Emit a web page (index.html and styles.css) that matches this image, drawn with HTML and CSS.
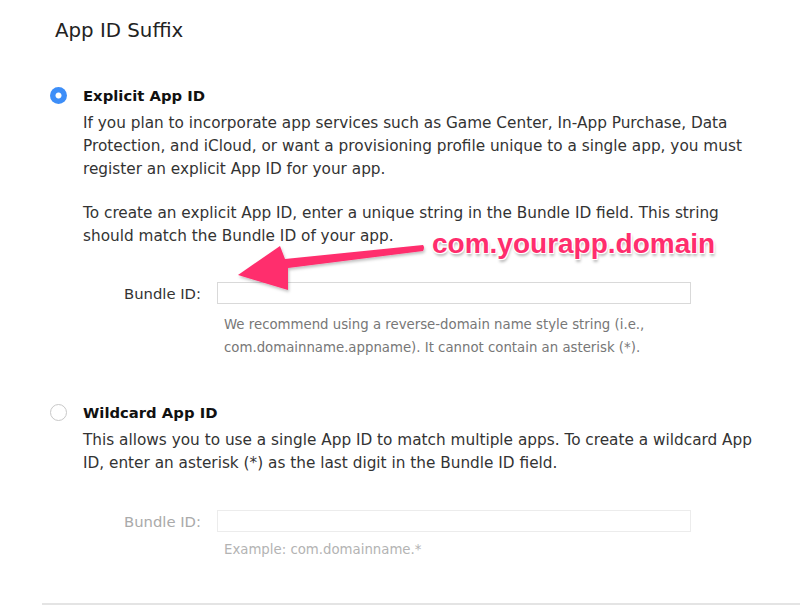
FILE: index.html
```html
<!DOCTYPE html>
<html lang="en">
<head>
<meta charset="utf-8">
<title>App ID Suffix</title>
<link rel="stylesheet" href="styles.css">
</head>
<body>
<div class="page">
  <h2 class="title">App ID Suffix</h2>

  <section class="option">
    <div class="option-head">
      <span class="radio radio-on"></span>
      <h3 class="option-name">Explicit App ID</h3>
    </div>
    <div class="option-body">
      <p class="text">If you plan to incorporate app services such as Game Center, In-App Purchase, Data Protection, and iCloud, or want a provisioning profile unique to a single app, you must register an explicit App ID for your app.</p>
      <p class="text">To create an explicit App ID, enter a unique string in the Bundle ID field. This string should match the Bundle ID of your app.</p>
      <div class="field">
        <label class="field-label">Bundle ID:</label>
        <div class="input"></div>
      </div>
      <p class="help">We recommend using a reverse-domain name style string (i.e., com.domainname.appname). It cannot contain an asterisk (*).</p>
    </div>
  </section>

  <section class="option option-second">
    <div class="option-head">
      <span class="radio"></span>
      <h3 class="option-name">Wildcard App ID</h3>
    </div>
    <div class="option-body">
      <p class="text">This allows you to use a single App ID to match multiple apps. To create a wildcard App ID, enter an asterisk (*) as the last digit in the Bundle ID field.</p>
      <div class="field field-disabled">
        <label class="field-label">Bundle ID:</label>
        <div class="input"></div>
      </div>
      <p class="help help-faint">Example: com.domainname.*</p>
    </div>
  </section>

  <div class="rule"></div>

  <div class="annotation">
    <svg class="arrow" width="200" height="60" viewBox="0 0 200 60">
      <defs>
        <filter id="sh" x="-10%" y="-20%" width="130%" height="150%">
          <feDropShadow dx="1" dy="2" stdDeviation="1.5" flood-color="#000" flood-opacity="0.25"/>
        </filter>
      </defs>
      <path d="M2 49 L44 20 L49 33 L187 19 Q189 21 187 25 L52 42 L52 64 Z" fill="#ff2d6d" filter="url(#sh)"/>
    </svg>
    <span class="note">com.yourapp.domain</span>
  </div>
</div>
</body>
</html>
```
FILE: styles.css
```css
html, body {
  margin: 0;
  padding: 0;
  background: #fff;
}
body {
  font-family: "DejaVu Sans", "Liberation Sans", sans-serif;
  color: #333;
}
.page {
  position: relative;
  width: 800px;
  height: 606px;
  overflow: hidden;
}
.title {
  margin: 0;
  padding: 19px 0 0 55px;
  font-size: 19.8px;
  font-weight: normal;
  line-height: 24px;
  color: #222;
}
.option {
  padding-left: 50px;
  margin-top: 41px;
}
.option-second {
  margin-top: 42px;
}
.option-head {
  display: flex;
  align-items: center;
  height: 23px;
}
.radio {
  width: 17px;
  height: 17px;
  box-sizing: border-box;
  border-radius: 50%;
  border: 1px solid #c8c8c8;
  background: #fff;
  margin-right: 16px;
  flex: none;
}
.radio-on {
  border: none;
  background: radial-gradient(circle, #fff 0 2.6px, #3d8ef8 3.4px);
}
.option-name {
  margin: 0;
  font-size: 14.8px;
  font-weight: bold;
  color: #111;
}
.option-body {
  padding-left: 33px;
  margin-top: 5px;
}
.text {
  max-width: 670px;
  margin: 0 0 21px;
  font-size: 15.3px;
  line-height: 23px;
  color: #333;
}
.field {
  display: flex;
  align-items: center;
  margin-top: 34px;
}
.option-second .field {
  margin-top: 35px;
}
.field-label {
  width: 118px;
  text-align: right;
  font-size: 14.8px;
  color: #333;
  margin-right: 16px;
}
.input {
  width: 474px;
  height: 22px;
  box-sizing: border-box;
  border: 1px solid #d9d9d9;
  background: #fff;
}
.field-disabled .field-label {
  color: #aaa;
}
.field-disabled .input {
  border-color: #ececec;
}
.help {
  margin: 9px 0 0 141px;
  font-size: 13.3px;
  line-height: 23px;
  color: #777;
}
.help-faint {
  margin-top: 6px;
  color: #b3b3b3;
}
.rule {
  position: absolute;
  left: 42px;
  right: 0;
  top: 603px;
  height: 2px;
  background: #e4e4e4;
}
.annotation {
  position: absolute;
  left: 236px;
  top: 226px;
  width: 490px;
  height: 70px;
}
.arrow {
  position: absolute;
  left: 0;
  top: 0;
  overflow: visible;
}
.note {
  position: absolute;
  left: 196px;
  top: 2px;
  font-family: "Liberation Sans", Arial, sans-serif;
  font-weight: bold;
  font-size: 28px;
  color: #ff2d6d;
  text-shadow: 0 0 2px #fff, 1px 1px 0 #fff, -1px -1px 0 #fff, 1px -1px 0 #fff, -1px 1px 0 #fff, 1px 3px 3px rgba(0,0,0,0.3);
}
```
